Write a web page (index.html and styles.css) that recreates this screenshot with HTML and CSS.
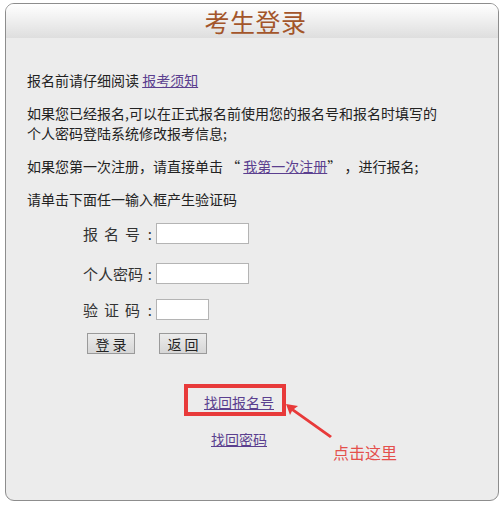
FILE: index.html
```html
<!DOCTYPE html>
<html lang="zh-CN">
<head>
<meta charset="utf-8">
<title>考生登录</title>
<link rel="stylesheet" href="styles.css">
</head>
<body>
<div class="panel">
  <div class="head"><h1 class="title">考生登录</h1></div>
  <div class="content">
    <p class="line">报名前请仔细阅读 <a href="#" class="lnk">报考须知</a></p>
    <p class="line">如果您已经报名,可以在正式报名前使用您的报名号和报名时填写的<br>个人密码登陆系统修改报考信息;</p>
    <p class="line">如果您第一次注册，请直接单击 “ <a href="#" class="lnk">我第一次注册</a>” ，进行报名;</p>
    <p class="line">请单击下面任一输入框产生验证码</p>
    <div class="form">
      <div class="row r1"><span class="lbl"><span class="sp">报名号</span><span>:</span></span><input class="inp" type="text"></div>
      <div class="row r2"><span class="lbl"><span>个人密码</span><span>:</span></span><input class="inp" type="text"></div>
      <div class="row r3"><span class="lbl"><span class="sp">验证码</span><span>:</span></span><input class="inp short" type="text"></div>
      <div class="btns"><button class="btn">登 录</button><button class="btn">返 回</button></div>
    </div>
    <div class="links">
      <a href="#" class="lnk big first">找回报名号</a>
      <a href="#" class="lnk big">找回密码</a>
      <span class="redbox"></span>
      <svg class="arrow" width="60" height="40" viewBox="0 0 60 40"><path d="M2 2 L14 4 L10 7 L48 34 L46 36 L8 9 L6 13 Z" fill="#e83a3a"/></svg>
      <span class="note">点击这里</span>
    </div>
  </div>
</div>
</body>
</html>
```
FILE: styles.css
```css
html, body { margin: 0; padding: 0; overflow: hidden; }
body {
  background: #fff;
  font-family: "Noto Sans CJK SC", "Noto Sans", sans-serif;
  color: #222;
  font-size: 14px;
}
.panel {
  margin: 3px 0 0 5px;
  width: 494px;
  height: 498px;
  border: 1px solid #8d8d8d;
  border-radius: 9px;
  background: #ececec;
  overflow: hidden;
  box-sizing: border-box;
}
.head {
  height: 34px;
  background: linear-gradient(#ffffff, #dedede);
  display: flex;
  justify-content: center;
  align-items: center;
}
.title {
  margin: 0 0 0 7px;
  font-size: 25px;
  font-weight: normal;
  color: #a3552a;
  line-height: 34px;
  letter-spacing: 0.5px;
}
.content { padding: 32px 0 0 21px; position: relative; }
.line { margin: 0 0 13px; line-height: 20px; }
.lnk { color: #5b3f8f; }
.form { padding: 1px 0 0 56px; }
.row { display: flex; align-items: center; height: 21px; }
.r2 { margin-top: 19px; }
.r3 { margin-top: 15px; }
.lbl {
  width: 69px; margin-right: 4px; flex-shrink: 0;
  display: flex; justify-content: space-between;
  font-size: 15px; color: #333; white-space: nowrap;
}
.sp { letter-spacing: 6px; }
.inp {
  width: 93px; height: 21px; box-sizing: border-box; flex-shrink: 0;
  border: 1px solid #b4b4b4; background: #fff; margin: 0; padding: 0;
}
.inp.short { width: 53px; }
.btns { display: flex; gap: 24px; margin: 13px 0 0 4px; }
.btn {
  width: 48px; height: 21px; padding: 0;
  border: 1px solid #9a9a9a;
  background: linear-gradient(#ececec, #d6d6d6);
  font-family: "Noto Sans CJK SC", sans-serif;
  font-size: 14px; color: #222;
}
.links {
  position: relative;
  display: flex; flex-direction: column; align-items: center;
  width: 120px; margin: 38px 0 0 152px;
}
.big { font-size: 14px; line-height: 20px; }
.first { margin-bottom: 17px; }
.redbox {
  position: absolute; left: 5px; top: -8px;
  width: 102px; height: 32px; box-sizing: border-box;
  border: 4px solid #e83a3a;
}
.arrow { position: absolute; left: 105px; top: 10px; }
.note {
  position: absolute; left: 154px; top: 48px;
  color: #e4504c; font-size: 16px; white-space: nowrap;
}
```
